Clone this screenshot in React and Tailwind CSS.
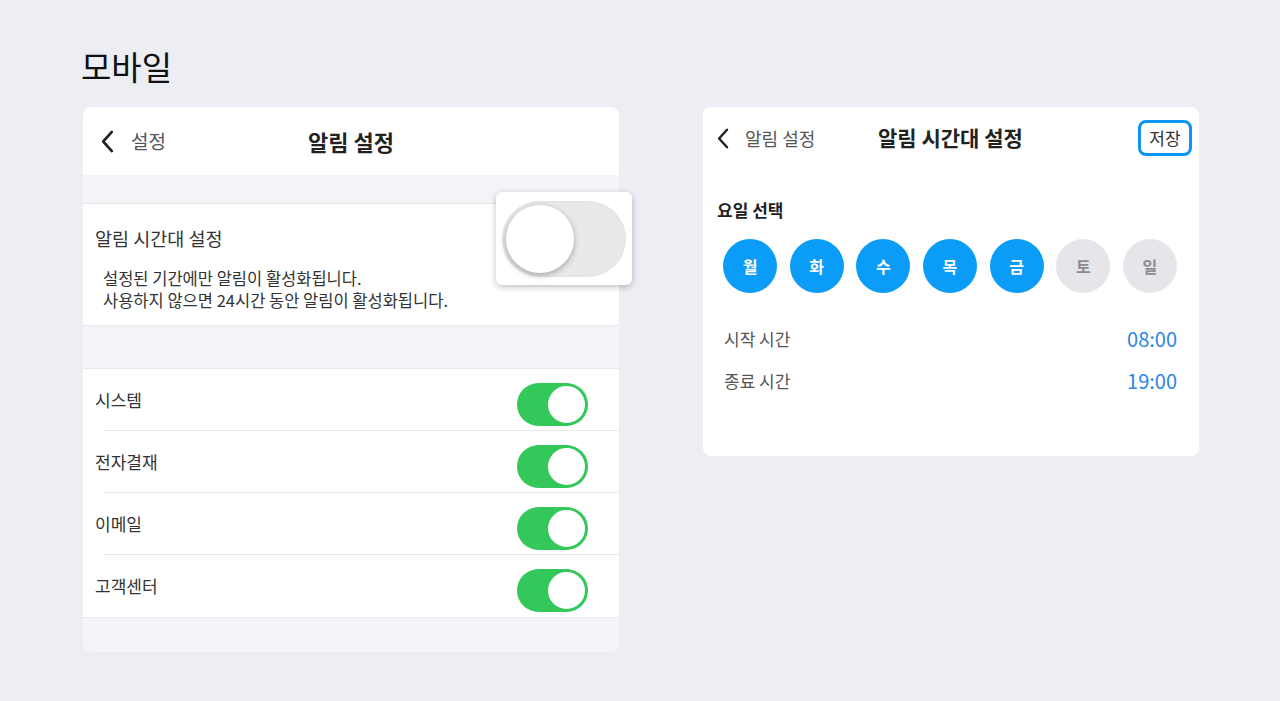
import React from "react";

const font = { fontFamily: '"Noto Sans CJK KR", "Noto Sans", sans-serif' };

const Chevron = ({ className }) => (
  <svg className={className} viewBox="0 0 14 24" fill="none">
    <path d="M11 2L2 12l9 10" stroke="#222" strokeWidth="2.8" strokeLinecap="round" strokeLinejoin="round" />
  </svg>
);

const GreenToggle = () => (
  <div className="mt-2 flex h-[43px] w-[71px] items-center justify-end rounded-full bg-[#34c759] p-[1px]">
    <div className="h-[41px] w-[41px] rounded-full border-[2px] border-[#34c759] bg-white" />
  </div>
);

const rows = ["시스템", "전자결재", "이메일", "고객센터"];
const days = [
  { d: "월", on: true },
  { d: "화", on: true },
  { d: "수", on: true },
  { d: "목", on: true },
  { d: "금", on: true },
  { d: "토", on: false },
  { d: "일", on: false },
];

export default function App() {
  return (
    <div className="min-h-[701px] w-full bg-[#eceef3] pl-[83px] pt-[44px]" style={font}>
      <h1 className="ml-[-2px] text-[33px] leading-[44px] text-[#111]">모바일</h1>

      <div className="mt-[19px] flex items-start gap-[84px]">
        {/* settings list */}
        <div className="relative w-[536px] rounded-lg bg-[#f2f4f8]">
          <div className="relative flex h-[68px] items-center rounded-t-lg bg-white px-[18px]">
            <Chevron className="h-[23px] w-[14px]" />
            <span className="ml-[16px] text-[19px] text-[#555]">설정</span>
            <span className="absolute left-1/2 -translate-x-1/2 text-[22px] font-bold text-[#222]">알림 설정</span>
          </div>

          <div className="h-[28px]" />

          <div className="border-y border-[#e6e8ec] bg-white px-3 pt-[19px] pb-[14px] text-[#333]">
            <p className="text-[18.5px] leading-[30px]">알림 시간대 설정</p>
            <div className="mt-[14px] pl-2 text-[16.5px]">
              <p className="h-[22px] leading-[22px]">설정된 기간에만 알림이 활성화됩니다.</p>
              <p className="h-[22px] leading-[22px]">사용하지 않으면 24시간 동안 알림이 활성화됩니다.</p>
            </div>
          </div>

          <div className="absolute left-[413px] top-[85px] flex h-[93px] w-[136px] items-center justify-center rounded-md bg-white shadow-[0_2px_6px_rgba(0,0,0,0.25)]">
            <div className="flex h-[76px] w-[124px] items-center rounded-full bg-[#e9e9ec] p-[4px] shadow-[inset_0_0_3px_rgba(0,0,0,0.06)]">
              <div className="h-[68px] w-[68px] rounded-full bg-white shadow-[0_2px_6px_rgba(0,0,0,0.3)]" />
            </div>
          </div>

          <div className="h-[42px]" />

          <div className="border-y border-[#e6e8ec] bg-white">
            {rows.map((r, i) => (
              <div key={r} className="relative flex h-[62px] items-center justify-between pl-3 pr-[31px]">
                <span className="text-[17px] text-[#333]">{r}</span>
                <GreenToggle />
                {i < rows.length - 1 && (
                  <div className="absolute bottom-0 left-[20px] right-0 h-px bg-[#e6e8ec]" />
                )}
              </div>
            ))}
          </div>

          <div className="h-[34px]" />
        </div>

        {/* time range */}
        <div className="h-[349px] w-[496px] rounded-lg bg-white">
          <div className="relative flex h-[62px] items-center pl-[14px] pr-[7px]">
            <Chevron className="h-[21px] w-[13px]" />
            <span className="ml-[15px] text-[18px] text-[#555]">알림 설정</span>
            <span className="absolute left-[175px] text-[21px] font-bold text-[#222]">알림 시간대 설정</span>
            <button className="ml-auto flex h-[36px] w-[54px] items-center justify-center rounded-lg border-[3px] border-[#0a95f5] text-[17px] text-[#333]">
              저장
            </button>
          </div>

          <p className="mt-[29px] pl-[14px] text-[17px] font-bold leading-[24px] text-[#222]">요일 선택</p>

          <div className="mt-[17px] flex justify-between pl-[20px] pr-[22px]">
            {days.map(({ d, on }) => (
              <div
                key={d}
                className={`flex h-[54px] w-[54px] items-center justify-center rounded-full text-[16px] font-bold ${
                  on ? "bg-[#0a9cf6] text-white" : "bg-[#e5e5ea] text-[#8b8b90]"
                }`}
              >
                {d}
              </div>
            ))}
          </div>

          <div className="mt-[34px] flex flex-col gap-[18px] pl-[21px] pr-[22px] text-[17px]">
            <div className="flex items-center justify-between leading-[24px]">
              <span className="text-[#555]">시작 시간</span>
              <span className="text-[20px] text-[#2b86e3]">08:00</span>
            </div>
            <div className="flex items-center justify-between leading-[24px]">
              <span className="text-[#555]">종료 시간</span>
              <span className="text-[20px] text-[#2b86e3]">19:00</span>
            </div>
          </div>
        </div>
      </div>
    </div>
  );
}
